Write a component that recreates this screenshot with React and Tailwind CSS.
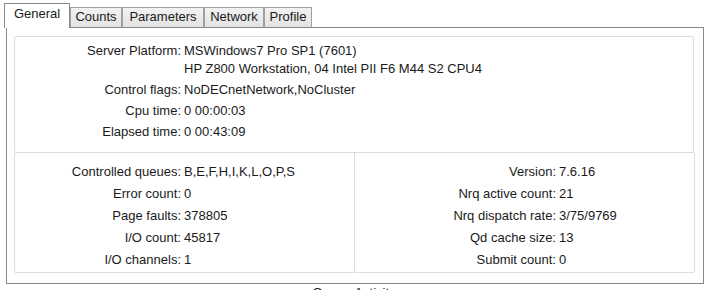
import React from "react";

const tabs = [
  { label: "General", w: "w-[66px]", active: true },
  { label: "Counts", w: "w-[52px]" },
  { label: "Parameters", w: "w-[82px]" },
  { label: "Network", w: "w-[60px]" },
  { label: "Profile", w: "w-[48px]" },
];

function Row({ label, children, labelW }) {
  return (
    <div className="flex">
      <div className={`${labelW} shrink-0 text-right pr-[3px]`}>{label}</div>
      <div>{children}</div>
    </div>
  );
}

export default function App() {
  return (
    <div
      className="w-[708px] h-[290px] overflow-hidden bg-white text-[13px] leading-[18px] text-[#1a1a1a]"
      style={{ fontFamily: '"Liberation Sans", Arial, sans-serif' }}
    >
      <div className="flex items-end h-[27px] pl-[4px]">
        {tabs.map((t) =>
          t.active ? (
            <div
              key={t.label}
              className={`${t.w} h-[25px] -mb-px relative z-10 bg-white border border-b-0 border-[#898989] text-center pt-px`}
            >
              {t.label}
            </div>
          ) : (
            <div
              key={t.label}
              className={`${t.w} h-[20px] bg-gradient-to-b from-[#f2f2f2] to-[#e3e3e3] border border-b-0 border-[#a0a0a0] text-center leading-[17px]`}
            >
              {t.label}
            </div>
          )
        )}
      </div>
      <div className="ml-[6px] w-[698px] h-[257px] border border-[#898989] pl-[7px] pt-[8px] pr-[9px]">
        <div className="h-[117px] border border-[#d5dfe5] rounded-[2px] pt-[5px] flex flex-col gap-[3px]">
          <Row label="Server Platform:" labelW="w-[169px]">
            <div>MSWindows7 Pro SP1 (7601)</div>
            <div>HP Z800 Workstation, 04 Intel PII F6 M44 S2 CPU4</div>
          </Row>
          <Row label="Control flags:" labelW="w-[169px]">
            NoDECnetNetwork,NoCluster
          </Row>
          <Row label="Cpu time:" labelW="w-[169px]">
            0 00:00:03
          </Row>
          <Row label="Elapsed time:" labelW="w-[169px]">
            0 00:43:09
          </Row>
        </div>
        <div className="grid grid-cols-[341px_340px] -mt-px">
          <div className="h-[121px] border border-[#d5dfe5] rounded-[2px] pt-[10px] flex flex-col gap-[4px]">
            <Row label="Controlled queues:" labelW="w-[169px]">
              B,E,F,H,I,K,L,O,P,S
            </Row>
            <Row label="Error count:" labelW="w-[169px]">
              0
            </Row>
            <Row label="Page faults:" labelW="w-[169px]">
              378805
            </Row>
            <Row label="I/O count:" labelW="w-[169px]">
              45817
            </Row>
            <Row label="I/O channels:" labelW="w-[169px]">
              1
            </Row>
          </div>
          <div className="h-[121px] -ml-px border border-[#d5dfe5] rounded-[2px] pt-[10px] flex flex-col gap-[4px]">
            <Row label="Version:" labelW="w-[204px]">
              7.6.16
            </Row>
            <Row label="Nrq active count:" labelW="w-[204px]">
              21
            </Row>
            <Row label="Nrq dispatch rate:" labelW="w-[204px]">
              3/75/9769
            </Row>
            <Row label="Qd cache size:" labelW="w-[204px]">
              13
            </Row>
            <Row label="Submit count:" labelW="w-[204px]">
              0
            </Row>
          </div>
        </div>
      </div>
      <div className="text-center">Queue Activity</div>
    </div>
  );
}
